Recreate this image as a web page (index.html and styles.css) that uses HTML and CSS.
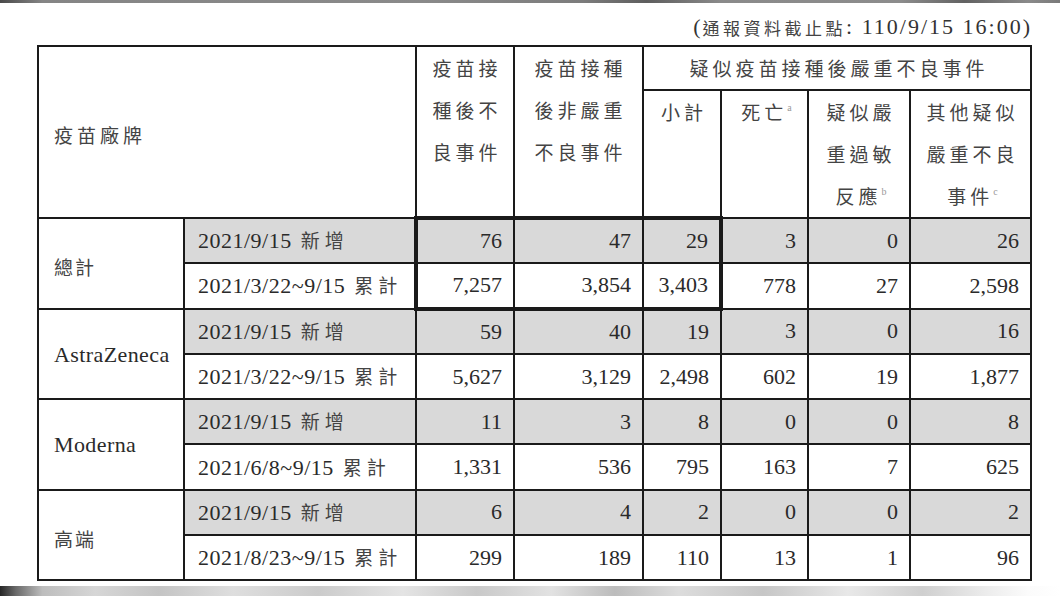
FILE: index.html
```html
<!DOCTYPE html>
<html lang="zh-Hant">
<head>
<meta charset="utf-8">
<title>疫苗接種後不良事件</title>
<link rel="stylesheet" href="styles.css">
</head>
<body>
<div class="page">
  <div class="topbar"></div>
  <div class="content">
    <div class="note">(<span class="cj">通報資料截止點</span>: 110/9/15 16:00)</div>
    <table class="grid">
      <colgroup>
        <col class="c1"><col class="c2"><col class="c3"><col class="c4"><col class="c5"><col class="c6"><col class="c7"><col class="c8">
      </colgroup>
      <thead>
        <tr class="h1">
          <th class="brandhead" colspan="2" rowspan="2">疫苗廠牌</th>
          <th class="hc" rowspan="2">疫苗接<br>種後不<br>良事件</th>
          <th class="hc" rowspan="2">疫苗接種<br>後非嚴重<br>不良事件</th>
          <th class="hmain" colspan="4">疑似疫苗接種後嚴重不良事件</th>
        </tr>
        <tr class="h2">
          <th class="hc">小計</th>
          <th class="hc">死亡<sup class="fn">a</sup></th>
          <th class="hc">疑似嚴<br>重過敏<br>反應<sup class="fn">b</sup></th>
          <th class="hc">其他疑似<br>嚴重不良<br>事件<sup class="fn">c</sup></th>
        </tr>
      </thead>
      <tbody>
        <tr class="new">
          <td class="brand" rowspan="2"><span class="cj">總計</span></td>
          <td class="date">2021/9/15 <span class="cj">新增</span></td>
          <td class="num bx-t bx-l">76</td>
          <td class="num bx-t">47</td>
          <td class="num bx-t bx-r">29</td>
          <td class="num">3</td>
          <td class="num">0</td>
          <td class="num">26</td>
        </tr>
        <tr class="cum">
          <td class="date">2021/3/22~9/15 <span class="cj">累計</span></td>
          <td class="num bx-b bx-l">7,257</td>
          <td class="num bx-b">3,854</td>
          <td class="num bx-b bx-r">3,403</td>
          <td class="num">778</td>
          <td class="num">27</td>
          <td class="num">2,598</td>
        </tr>
        <tr class="new">
          <td class="brand latin" rowspan="2">AstraZeneca</td>
          <td class="date">2021/9/15 <span class="cj">新增</span></td>
          <td class="num">59</td>
          <td class="num">40</td>
          <td class="num">19</td>
          <td class="num">3</td>
          <td class="num">0</td>
          <td class="num">16</td>
        </tr>
        <tr class="cum">
          <td class="date">2021/3/22~9/15 <span class="cj">累計</span></td>
          <td class="num">5,627</td>
          <td class="num">3,129</td>
          <td class="num">2,498</td>
          <td class="num">602</td>
          <td class="num">19</td>
          <td class="num">1,877</td>
        </tr>
        <tr class="new">
          <td class="brand latin" rowspan="2">Moderna</td>
          <td class="date">2021/9/15 <span class="cj">新增</span></td>
          <td class="num">11</td>
          <td class="num">3</td>
          <td class="num">8</td>
          <td class="num">0</td>
          <td class="num">0</td>
          <td class="num">8</td>
        </tr>
        <tr class="cum">
          <td class="date">2021/6/8~9/15 <span class="cj">累計</span></td>
          <td class="num">1,331</td>
          <td class="num">536</td>
          <td class="num">795</td>
          <td class="num">163</td>
          <td class="num">7</td>
          <td class="num">625</td>
        </tr>
        <tr class="new">
          <td class="brand" rowspan="2"><span class="cj">高端</span></td>
          <td class="date">2021/9/15 <span class="cj">新增</span></td>
          <td class="num">6</td>
          <td class="num">4</td>
          <td class="num">2</td>
          <td class="num">0</td>
          <td class="num">0</td>
          <td class="num">2</td>
        </tr>
        <tr class="cum">
          <td class="date">2021/8/23~9/15 <span class="cj">累計</span></td>
          <td class="num">299</td>
          <td class="num">189</td>
          <td class="num">110</td>
          <td class="num">13</td>
          <td class="num">1</td>
          <td class="num">96</td>
        </tr>
      </tbody>
    </table>
    <div class="bottombar"></div>
  </div>
</div>
</body>
</html>
```
FILE: styles.css
```css
* { box-sizing: border-box; }
html, body { margin: 0; padding: 0; background: #fff; }
body {
  font-family: "Liberation Serif", "Noto Sans CJK TC", serif;
  color: #2a2a2a;
}
.page {
  width: 1060px;
  height: 596px;
  display: flex;
  flex-direction: column;
  overflow: hidden;
}
.topbar {
  flex: none;
  height: 3px;
  background: linear-gradient(90deg, #4a4a4a 0%, #858585 4%, #8a8a8a 40%, #7c7c7c 55%, #5e5e5e 61%, #8a8a8a 68%, #8c8c8c 85%, #626262 91%, #8a8a8a 97%, #7a7a7a 100%);
}
.content {
  flex: 1;
  display: flex;
  flex-direction: column;
  padding-left: 37px;
}
.note {
  flex: none;
  width: 995px;
  height: 42px;
  display: flex;
  justify-content: flex-end;
  align-items: center;
  padding-top: 6px;
  font-size: 22px;
  letter-spacing: 2px;
  color: #333;
  white-space: pre;
}
.note .cj {
  font-size: 17px;
  letter-spacing: 3.5px;
}
.cj {
  font-family: "Noto Sans CJK TC", sans-serif;
  color: #444;
}
.grid {
  border-collapse: collapse;
  table-layout: fixed;
  width: 993px;
  flex: none;
}
.c1 { width: 146px; }
.c2 { width: 232px; }
.c3 { width: 98px; }
.c4 { width: 129px; }
.c5 { width: 78px; }
.c6 { width: 87px; }
.c7 { width: 102px; }
.c8 { width: 121px; }
.grid th, .grid td {
  border: 2px solid #1a1a1a;
  padding: 0;
  font-weight: 400;
}
.grid th {
  font-family: "Noto Sans CJK TC", sans-serif;
  font-size: 19px;
  letter-spacing: 4px;
  color: #444;
}
.h1 { height: 44px; }
.h2 { height: 127px; }
.brandhead {
  text-align: left;
  vertical-align: middle;
  line-height: 30px;
  padding: 6px 0 0 15px !important;
}
.hc {
  vertical-align: top;
  text-align: center;
  line-height: 42px;
  padding: 0 0 0 4px !important;
}
.hmain {
  vertical-align: middle;
  text-align: center;
  line-height: 30px;
  padding: 0 0 0 4px !important;
}
.fn {
  font-family: "Liberation Serif", serif;
  font-size: 10px;
  letter-spacing: 0;
  color: #9a9a9a;
  line-height: 0;
  vertical-align: 9px;
  margin-left: 0;
}
.grid tbody tr { height: 45.3px; }
.grid td {
  font-size: 22px;
  line-height: 26px;
  vertical-align: middle;
}
.new .date, .new .num { background: #d9d9d9; }
.brand {
  text-align: left;
  padding: 8px 0 0 15px !important;
  background: #fff;
}
.brand .cj {
  font-size: 19px;
  letter-spacing: 2px;
}
.brand.latin {
  letter-spacing: 0.4px;
  color: #2a2a2a;
  padding-top: 2px !important;
}
.date {
  padding-left: 13px !important;
  letter-spacing: 0.5px;
  white-space: nowrap;
}
.date .cj {
  font-size: 19px;
  letter-spacing: 5px;
  margin-left: 3px;
}
.num {
  text-align: right;
  padding-right: 11px !important;
}
.grid td.bx-t { border-top-width: 4px; }
.grid td.bx-b { border-bottom-width: 4px; }
.grid td.bx-l { border-left-width: 4px; }
.grid td.bx-r { border-right-width: 4px; }
.bottombar {
  flex: none;
  height: 10px;
  margin-top: auto;
  margin-left: -37px;
  width: 1060px;
  background: linear-gradient(90deg, #262626 0%, #6a6a6a 1.5%, #bdbdbd 4%, #d6d6d6 9%, #c4c4c4 15%, #dedede 22%, #cbcbcb 30%, #e4e4e4 38%, #c9c9c9 45%, #e2e2e2 52%, #bcbcbc 58%, #dcdcdc 64%, #c6c6c6 72%, #e8e8e8 80%, #cfcfcf 87%, #ececec 93%, #fbfbfb 97%, #ffffff 100%);
}
```
